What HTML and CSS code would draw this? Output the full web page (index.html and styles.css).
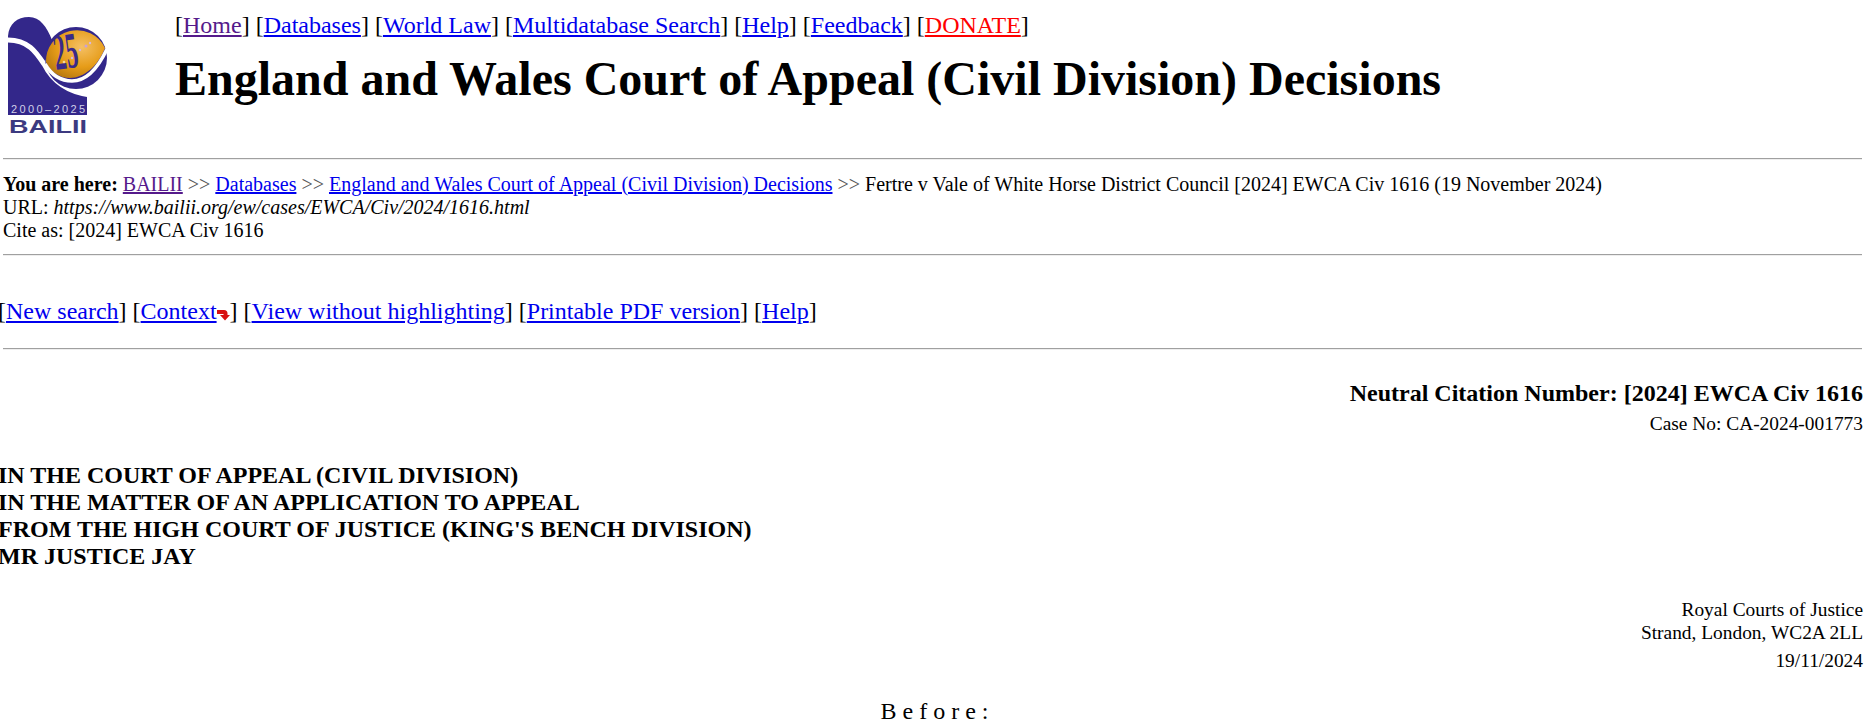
FILE: index.html
```html
<!DOCTYPE html>
<html>
<head>
    <title>Fertre v Vale of White Horse District Council [2024] EWCA Civ 1616</title>
    <link rel="stylesheet" href="styles.css">
</head>
<body>
    <div class="header">
        <div class="logo">
            <svg width="110" height="140" viewBox="0 0 110 140">
                <defs>
                    <radialGradient id="ball" cx="0.6" cy="0.35" r="0.7">
                        <stop offset="0" stop-color="#f4c065"/>
                        <stop offset="0.6" stop-color="#e69c18"/>
                        <stop offset="1" stop-color="#b97a10"/>
                    </radialGradient>
                </defs>
                <!-- blue body and hump -->
                <path d="M8 36 C9 24 17 17 29 17 C40 17 47 27 52 40 L44 64 C52 80 66 92 87 95 L87 115 L8 115 Z" fill="#33278a"/>
                <path d="M8 40 C28 40 36 52 44 64 C52 80 66 92 90 95" fill="none" stroke="#fff" stroke-width="5"/>
                <!-- sphere, dark crescent underneath -->
                <circle cx="76" cy="58" r="31" fill="#33278a"/>
                <path d="M46 62 A31 31 0 0 1 105 48 C98 66 84 78 70 78 C60 78 50 72 46 62 Z" fill="url(#ball)"/>
                <path d="M45 64 C52 76 62 81 72 81 C86 81 98 68 107 49" fill="none" stroke="#fff" stroke-width="3.5"/>
                <text x="0" y="0" class="logo-big" transform="translate(56 70) rotate(-8) scale(0.8 1.7)">25</text>
                <circle cx="86" cy="46" r="1.5" fill="#c9a0d8"/>
                <circle cx="90" cy="43" r="1.2" fill="#d8b8e0"/>
                <circle cx="80" cy="50" r="1.2" fill="#d8b8e0"/>
                <circle cx="64" cy="62" r="1.3" fill="#f0d8a0"/>
                <circle cx="72" cy="58" r="1.2" fill="#d8b8e0"/>
                <text x="11" y="113" class="logo-years" textLength="74">2000–2025</text>
                <text x="9" y="133" class="logo-name" textLength="78" lengthAdjust="spacingAndGlyphs">BAILII</text>
            </svg>
        </div>
        <div class="header-main">
            <div class="nav">
                [<a class="visited" href="#">Home</a>] [<a href="#">Databases</a>] [<a href="#">World Law</a>] [<a href="#">Multidatabase Search</a>] [<a href="#">Help</a>] [<a href="#">Feedback</a>] [<a class="donate" href="#">DONATE</a>]
            </div>
            <h1>England and Wales Court of Appeal (Civil Division) Decisions</h1>
        </div>
    </div>
    <hr>
    <div class="crumbs">
        <b>You are here:</b> <a class="visited" href="#">BAILII</a> <span class="sep">&gt;&gt;</span> <a href="#">Databases</a> <span class="sep">&gt;&gt;</span> <a href="#">England and Wales Court of Appeal (Civil Division) Decisions</a> <span class="sep">&gt;&gt;</span> Fertre v Vale of White Horse District Council [2024] EWCA Civ 1616 (19 November 2024)<br>
        URL: <i>https://www.bailii.org/ew/cases/EWCA/Civ/2024/1616.html</i><br>
        Cite as: [2024] EWCA Civ 1616
    </div>
    <hr>
    <div class="tools">
        [<a href="#">New search</a>] [<a href="#">Context</a><svg class="arrow" width="13" height="13" viewBox="0 0 13 13"><path d="M0 2 H7 Q10.5 2 10.5 5.5 V7 H13 L8 12.5 L3 7 H6.5 V6 H0 Z" fill="#d81010"/></svg>] [<a href="#">View without highlighting</a>] [<a href="#">Printable PDF version</a>] [<a href="#">Help</a>]
    </div>
    <hr>
    <div class="citation">
        <div class="neutral">Neutral Citation Number: [2024] EWCA Civ 1616</div>
        <div class="case-no">Case No: CA-2024-001773</div>
    </div>
    <div class="court">
        IN THE COURT OF APPEAL (CIVIL DIVISION)<br>
        IN THE MATTER OF AN APPLICATION TO APPEAL<br>
        FROM THE HIGH COURT OF JUSTICE (KING'S BENCH DIVISION)<br>
        MR JUSTICE JAY
    </div>
    <div class="venue">
        Royal Courts of Justice<br>
        Strand, London, WC2A 2LL
    </div>
    <div class="date">19/11/2024</div>
    <div class="before">B e f o r e :</div>
</body>
</html>
```

FILE: styles.css
```css
html {
    overflow: hidden;
}

body {
    margin: 0;
    font-family: "Liberation Serif", "Times New Roman", serif;
    font-size: 20px;
    color: #000;
    background-color: #fff;
}

a {
    color: #0000ee;
}

a.visited {
    color: #551a8b;
}

a.donate {
    color: #ff0000;
}

hr {
    height: 0;
    border: none;
    border-top: 1px solid #a0a0a0;
    border-bottom: 1px solid #eee;
    margin: 0 7px 0 3px;
}

.header {
    display: flex;
    height: 158px;
}

.logo {
    width: 175px;
}

.logo svg {
    display: block;
}

.logo-big {
    font-family: "Liberation Serif", serif;
    font-size: 30px;
    font-weight: bold;
    fill: #3a2a8a;
}

.logo-years {
    font-family: "Liberation Sans", sans-serif;
    font-size: 11px;
    fill: #d0d0e8;
}

.logo-name {
    font-family: "Liberation Sans", sans-serif;
    font-size: 18px;
    font-weight: bold;
    fill: #3c3a80;
}

.nav {
    font-size: 24px;
    padding-top: 12px;
}

h1 {
    font-size: 48px;
    margin: 12px 0 0;
}

.crumbs {
    padding: 13px 0 0 3px;
    line-height: 23px;
    height: 81px;
}

.sep {
    color: #555;
}

.tools {
    font-size: 24px;
    padding-top: 42px;
    height: 50px;
    margin-left: -2px;
}

.arrow {
    vertical-align: -2px;
}

.citation {
    text-align: right;
    padding: 30px 6px 0 0;
}

.neutral {
    font-size: 24px;
    font-weight: bold;
}

.case-no {
    font-size: 19.4px;
    margin-top: 6px;
}

.court {
    font-size: 24px;
    font-weight: bold;
    line-height: 27px;
    margin: 27px 0 0 -2px;
}

.venue {
    font-size: 19.4px;
    text-align: right;
    padding-right: 6px;
    margin-top: 28px;
    line-height: 23px;
}

.date {
    font-size: 19.4px;
    text-align: right;
    padding-right: 6px;
    margin-top: 6px;
}

.before {
    text-align: center;
    font-size: 24px;
    margin-top: 26px;
}
```
